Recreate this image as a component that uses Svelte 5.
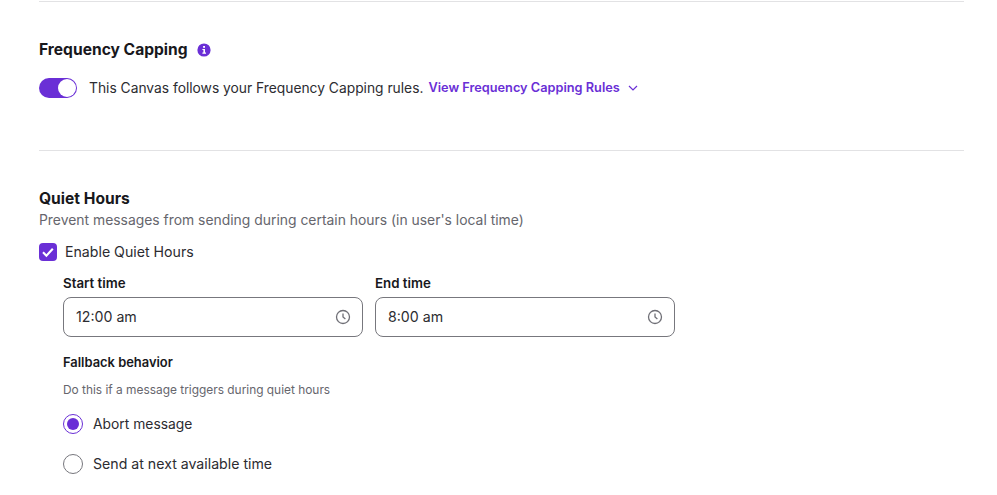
<script>
  const clockPath = "M8 1.5a6.5 6.5 0 1 0 0 13 6.5 6.5 0 0 0 0-13z";
</script>

<div class="page">
  <hr class="rule first" />
  <section class="freq">
    <div class="title-row">
      <h2>Frequency Capping</h2>
      <svg class="info" viewBox="0 0 14 14" width="14" height="14" aria-hidden="true">
        <circle cx="7" cy="7" r="6.6" fill="#6a2fd6" />
        <rect x="6.1" y="3" width="1.9" height="1.8" fill="#fff" />
        <path d="M5.4 6h2.6v3.6h1v1.1H5.4V9.6h1V7.1h-1z" fill="#fff" />
      </svg>
    </div>
    <div class="toggle-row">
      <span class="toggle"><span class="knob"></span></span>
      <span class="body-text narrow">This Canvas follows your Frequency Capping rules.</span>
      <span class="link">View Frequency Capping Rules</span>
      <svg class="chev" viewBox="0 0 10 6" width="10" height="6" aria-hidden="true">
        <path d="M1 1l4 4 4-4" fill="none" stroke="#6a2fd6" stroke-width="1.2" />
      </svg>
    </div>
  </section>
  <hr class="rule" />
  <section class="quiet">
    <h2>Quiet Hours</h2>
    <p class="desc">Prevent messages from sending during certain hours (in user's local time)</p>
    <div class="check-row">
      <span class="check">
        <svg viewBox="0 0 18 18" width="18" height="18" aria-hidden="true">
          <path d="M4 9.3l3.4 3.4 6.4-7" fill="none" stroke="#fff" stroke-width="2.1" />
        </svg>
      </span>
      <span class="body-text">Enable Quiet Hours</span>
    </div>
    <div class="indent">
      <div class="fields">
        {#each [["Start time", "12:00 am"], ["End time", "8:00 am"]] as [label, value]}
          <div class="field">
            <div class="label">{label}</div>
            <div class="input">
              <span>{value}</span>
              <svg viewBox="0 0 16 16" width="16" height="16" aria-hidden="true">
                <path d={clockPath} fill="none" stroke="#6f6f76" stroke-width="1.3" />
                <path d="M8 4.4V8l2.4 2" fill="none" stroke="#6f6f76" stroke-width="1.3" />
              </svg>
            </div>
          </div>
        {/each}
      </div>
      <div class="label fallback">Fallback behavior</div>
      <p class="hint">Do this if a message triggers during quiet hours</p>
      <div class="radio-row">
        <span class="radio on"><span class="dot"></span></span>
        <span class="body-text abort">Abort message</span>
      </div>
      <div class="radio-row second">
        <span class="radio"></span>
        <span class="body-text">Send at next available time</span>
      </div>
    </div>
  </section>
</div>

<style>
  :global(body) {
    margin: 0;
    background: #fff;
  }
  .page {
    box-sizing: border-box;
    width: 964px;
    height: 495px;
    padding-left: 39px;
    overflow: hidden;
    font-family: Inter, "Noto Sans", sans-serif;
    color: #1f1f24;
  }
  .rule {
    margin: 0;
    border: 0;
    height: 1px;
    background: #e2e2e4;
  }
  .first {
    margin-top: 1px;
  }
  .freq {
    height: 148px;
    box-sizing: border-box;
    padding-top: 38px;
  }
  h2 {
    margin: 0;
    font-size: 15.6px;
    line-height: 20px;
    font-weight: 700;
    color: #18181c;
  }
  .title-row {
    display: flex;
    align-items: center;
    gap: 9px;
  }
  .info {
    display: block;
  }
  .toggle-row {
    display: flex;
    align-items: center;
    margin-top: 18px;
    height: 20px;
  }
  .toggle {
    box-sizing: border-box;
    width: 38px;
    height: 20px;
    border-radius: 10px;
    background: #6a2fd6;
    display: flex;
    justify-content: flex-end;
    align-items: center;
    padding-right: 1px;
    margin-right: 12px;
  }
  .knob {
    width: 18px;
    height: 18px;
    border-radius: 50%;
    background: #fff;
  }
  .body-text {
    font-size: 14.15px;
    line-height: 20px;
    color: #2c2c31;
  }
  .narrow {
    font-size: 13.8px;
  }
  .abort {
    font-size: 13.85px;
  }
  .link {
    margin-left: 5px;
    font-size: 12.75px;
    line-height: 20px;
    font-weight: 600;
    color: #6a2fd6;
  }
  .chev {
    margin-left: 8px;
  }
  .quiet {
    padding-top: 38px;
  }
  .desc {
    margin: 1px 0 0;
    font-size: 13.9px;
    line-height: 20px;
    color: #66666d;
  }
  .check-row {
    display: flex;
    align-items: center;
    gap: 8px;
    margin-top: 12px;
    height: 20px;
  }
  .check {
    width: 18px;
    height: 18px;
    border-radius: 4px;
    background: #6a2fd6;
    display: block;
  }
  .check svg {
    display: block;
  }
  .indent {
    padding-left: 24px;
  }
  .fields {
    display: flex;
    gap: 12px;
    margin-top: 13px;
  }
  .label {
    font-size: 13.3px;
    line-height: 16px;
    font-weight: 600;
    color: #18181c;
  }
  .input {
    box-sizing: border-box;
    width: 300px;
    height: 40px;
    margin-top: 6px;
    padding: 0 11px 1px 12px;
    border: 1px solid #77777d;
    border-radius: 8px;
    display: flex;
    justify-content: space-between;
    align-items: center;
    font-size: 14.2px;
    color: #2c2c31;
  }
  .input svg {
    display: block;
  }
  .label.fallback {
    margin-top: 18px;
    font-size: 12.9px;
  }
  .hint {
    margin: 11px 0 0;
    font-size: 11.9px;
    line-height: 16px;
    color: #66666d;
  }
  .radio-row {
    display: flex;
    align-items: center;
    gap: 10px;
    margin-top: 16px;
    height: 20px;
  }
  .radio-row.second {
    margin-top: 20px;
  }
  .radio {
    box-sizing: border-box;
    width: 20px;
    height: 20px;
    border-radius: 50%;
    border: 1px solid #77777d;
    display: flex;
    align-items: center;
    justify-content: center;
  }
  .radio.on {
    border-color: #6a2fd6;
  }
  .dot {
    width: 12px;
    height: 12px;
    border-radius: 50%;
    background: #6a2fd6;
  }
</style>
